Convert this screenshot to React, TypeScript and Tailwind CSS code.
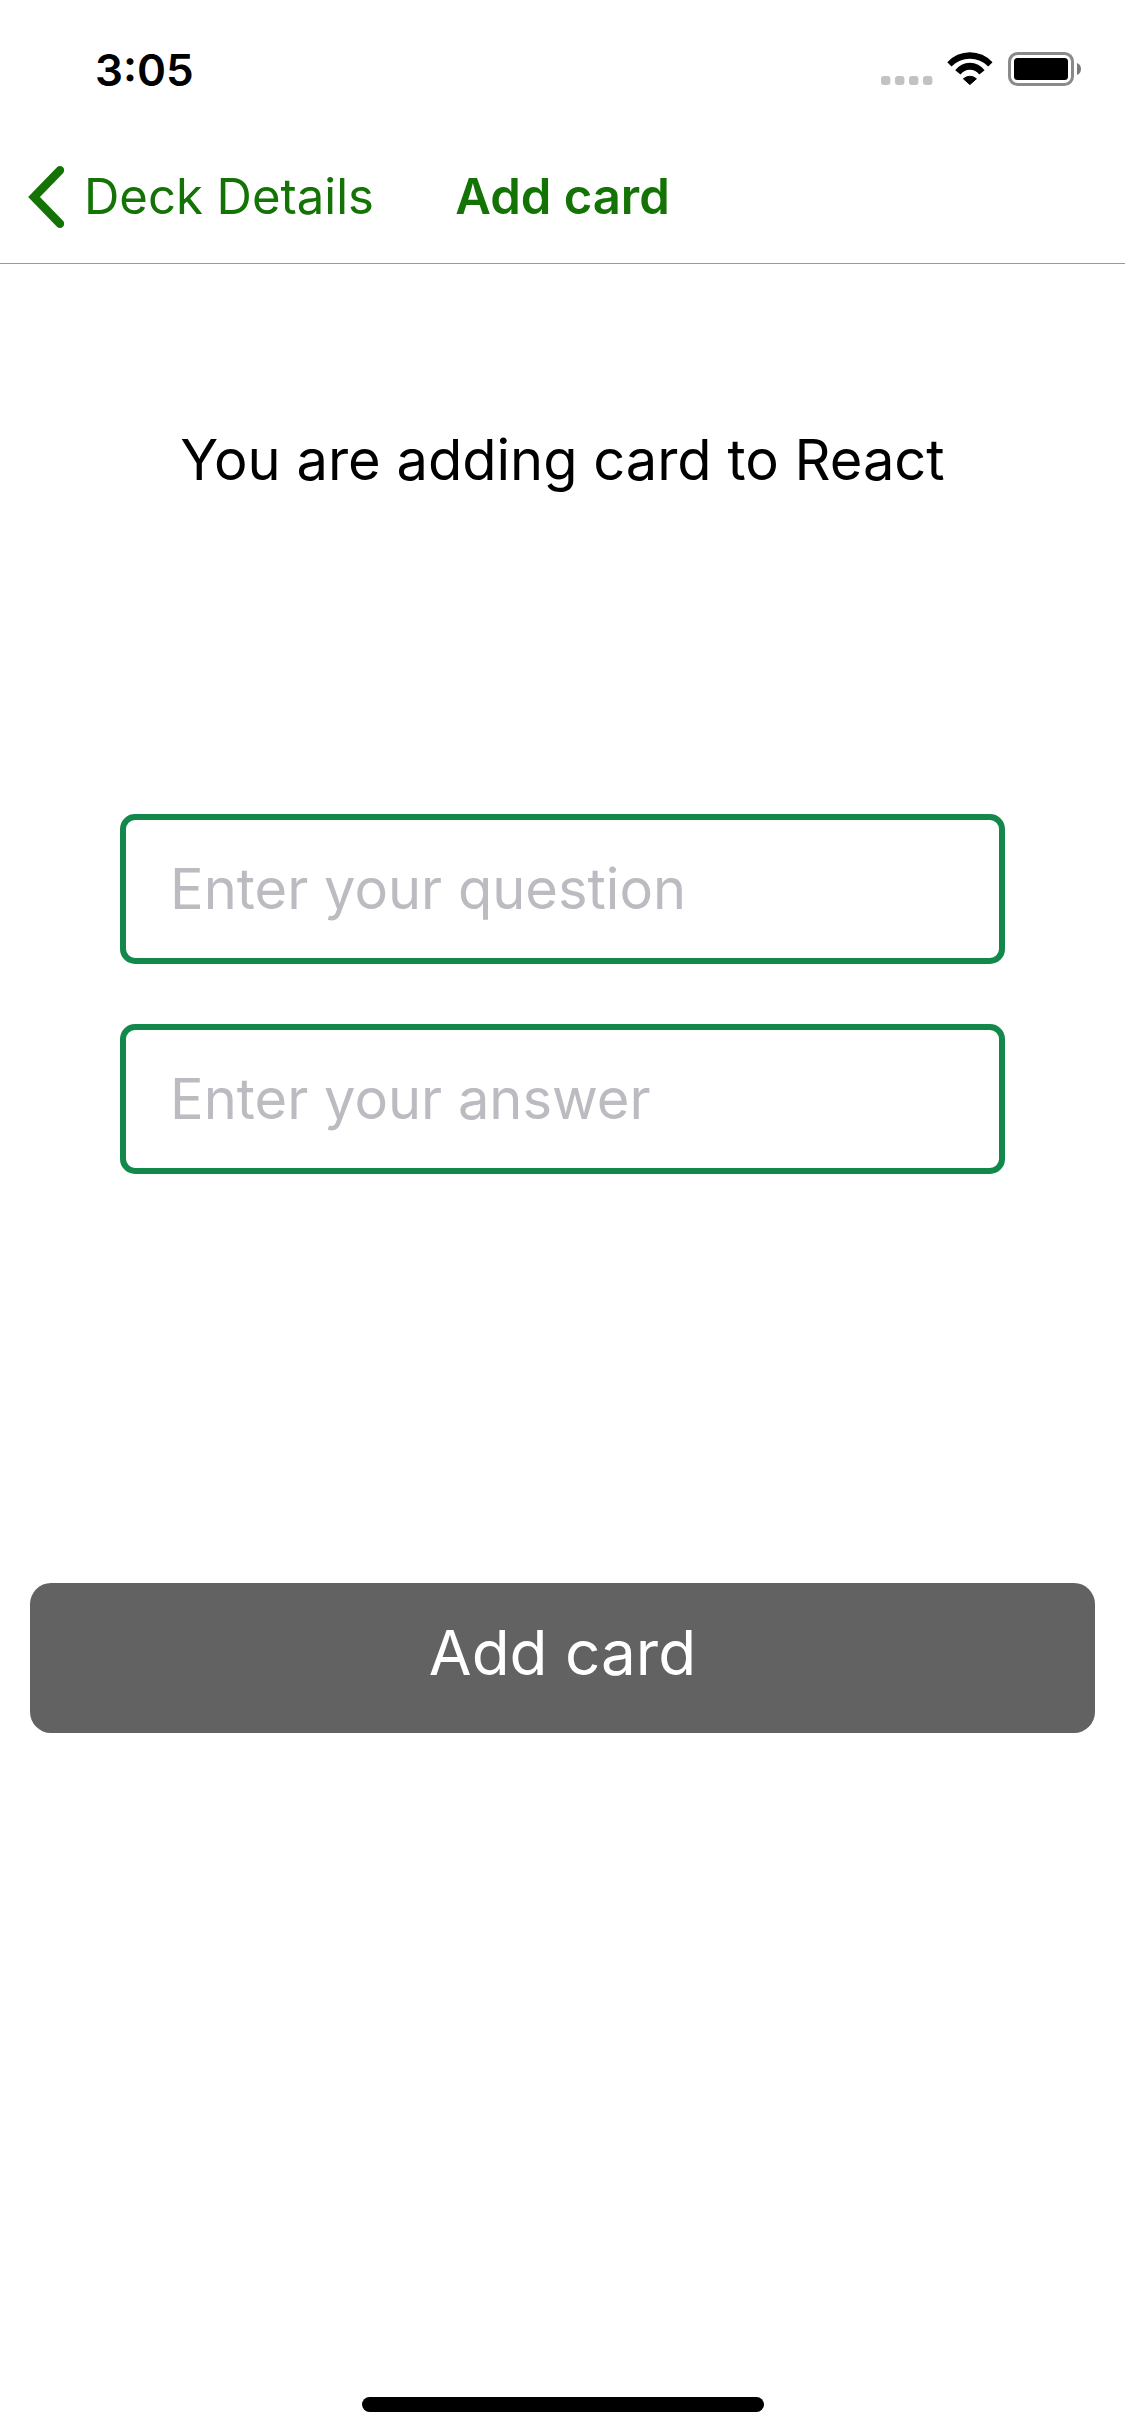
import { useState } from "react";

function StatusBar() {
  return (
    <div className="flex h-[132px] items-start justify-between pl-[95px] pr-11 pt-[43px]">
      <time className="text-[44px] font-semibold leading-[54px] text-black">3:05</time>
      <div className="flex items-start pt-[9px]">
        <svg className="mt-6 h-[9px] w-[52px]" viewBox="0 0 52 9" fill="#c2c2c2" aria-hidden="true">
          <rect x="0" width="9.4" height="9" rx="3" />
          <rect x="14" width="9.4" height="9" rx="3" />
          <rect x="28" width="9.4" height="9" rx="3" />
          <rect x="42" width="9.4" height="9" rx="3" />
        </svg>
        <svg className="ml-[14px] h-[34px] w-[47px]" viewBox="0 0 47 34" aria-hidden="true">
          <path d="M0.3 10.3 A30.3 30.3 0 0 1 45.5 10.3 L41.3 14.4 A25.8 25.8 0 0 0 4.5 14.4 Z" />
          <path d="M8.2 18.3 A18.2 18.2 0 0 1 37.6 18.3 L32.3 22.4 A11.8 11.8 0 0 0 13.5 22.4 Z" />
          <path d="M16.4 26.8 A9.6 9.6 0 0 1 29.4 26.8 L22.9 32.6 Z" stroke="#000" strokeWidth="1" strokeLinejoin="round" />
        </svg>
        <svg className="ml-[14px] h-[34px] w-[73px]" viewBox="0 0 73 34" aria-hidden="true">
          <rect x="1.5" y="1.5" width="63" height="31" rx="8" fill="none" stroke="#8a8a8a" strokeWidth="3" />
          <rect x="6" y="6" width="54" height="22" rx="3.5" />
          <path d="M69 11 A6.5 6.5 0 0 1 69 23 Z" fill="#7a7a7a" />
        </svg>
      </div>
    </div>
  );
}

function Header() {
  return (
    <header className="grid h-[132px] grid-cols-[1fr_auto_1fr] items-center border-b border-[#999999] pb-[2px] text-[49px] leading-[60px] text-[#137304]">
      <a href="#deck" className="flex items-center gap-5 whitespace-nowrap pl-7">
        <svg className="h-[62px] w-9" viewBox="0 0 36 62" fill="none" aria-hidden="true">
          <path d="M32 4.3 L6 31 L32 57.7" stroke="currentColor" strokeWidth="8.4" strokeLinecap="round" />
        </svg>
        Deck Details
      </a>
      <h1 className="whitespace-nowrap font-semibold">Add card</h1>
    </header>
  );
}

function Field({
  label,
  value,
  onChange,
}: {
  label: string;
  value: string;
  onChange: (value: string) => void;
}) {
  return (
    <input
      type="text"
      aria-label={label}
      placeholder={label}
      value={value}
      onChange={(event) => onChange(event.target.value)}
      className="h-[150px] w-full rounded-[15px] border-[6px] border-[#12884b] bg-white px-11 text-[56px] text-black outline-none placeholder:text-[#bbbbc1]"
    />
  );
}

export default function App() {
  const [question, setQuestion] = useState("");
  const [answer, setAnswer] = useState("");

  return (
    <div className="flex min-h-screen flex-col bg-white font-['Inter',sans-serif]">
      <StatusBar />
      <Header />
      <main>
        <form onSubmit={(event) => event.preventDefault()}>
          <p className="pt-40 text-center text-[56px] leading-[72px] text-black">
            You are adding card to React
          </p>
          <div className="flex flex-col gap-[60px] px-[120px] pt-[318px]">
            <Field label="Enter your question" value={question} onChange={setQuestion} />
            <Field label="Enter your answer" value={answer} onChange={setAnswer} />
          </div>
          <div className="px-[30px] pt-[409px]">
            <button
              type="submit"
              className="h-[150px] w-full rounded-[21px] bg-[#626262] pb-[10px] text-[62px] leading-[80px] text-white"
            >
              Add card
            </button>
          </div>
        </form>
      </main>
      <div className="mx-auto mb-6 mt-auto h-[15px] w-[402px] rounded-full bg-black" />
    </div>
  );
}
